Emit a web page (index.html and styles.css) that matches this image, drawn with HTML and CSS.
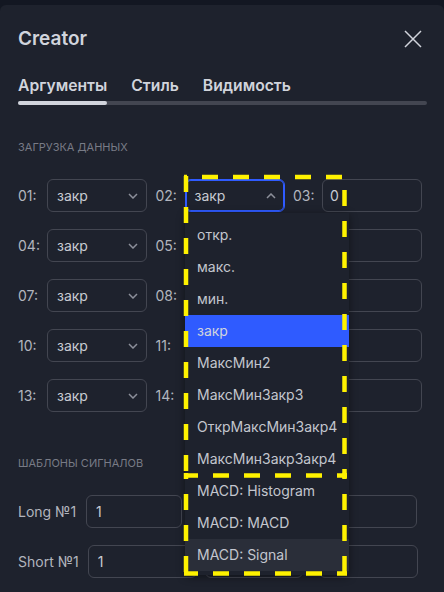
FILE: index.html
```html
<!DOCTYPE html>
<html lang="ru">
<head>
<meta charset="utf-8">
<title>Creator</title>
<link rel="stylesheet" href="styles.css">
</head>
<body>
<div class="panel">
  <header class="header">
    <h1 class="title">Creator</h1>
    <button class="close" aria-label="Закрыть"><svg width="18" height="18" viewBox="0 0 18 18"><path d="M1 1L17 17M17 1L1 17"/></svg></button>
  </header>
  <nav class="tabs">
    <span class="tab">Аргументы</span>
    <span class="tab">Стиль</span>
    <span class="tab">Видимость</span>
  </nav>
  <div class="track"><div class="track-active"></div></div>

  <section class="sec sec-data">
    <div class="sec-title">Загрузка данных</div>
    <div class="grid">
      <div class="row">
        <div class="cell"><span class="lbl">01:</span><div class="sel"><span>закр</span><svg class="chev" width="10" height="6" viewBox="0 0 10 6"><path d="M1 1L5 5L9 1"/></svg></div></div>
        <div class="cell"><span class="lbl">02:</span><div class="sel sel-open"><span>закр</span><svg class="chev" width="10" height="6" viewBox="0 0 10 6"><path d="M1 5L5 1L9 5"/></svg></div></div>
        <div class="cell"><span class="lbl">03:</span><div class="inp">0</div></div>
      </div>
      <div class="row">
        <div class="cell"><span class="lbl">04:</span><div class="sel"><span>закр</span><svg class="chev" width="10" height="6" viewBox="0 0 10 6"><path d="M1 1L5 5L9 1"/></svg></div></div>
        <div class="cell"><span class="lbl">05:</span><div class="sel"></div></div>
        <div class="cell"><span class="lbl"></span><div class="inp"></div></div>
      </div>
      <div class="row">
        <div class="cell"><span class="lbl">07:</span><div class="sel"><span>закр</span><svg class="chev" width="10" height="6" viewBox="0 0 10 6"><path d="M1 1L5 5L9 1"/></svg></div></div>
        <div class="cell"><span class="lbl">08:</span><div class="sel"></div></div>
        <div class="cell"><span class="lbl"></span><div class="inp"></div></div>
      </div>
      <div class="row">
        <div class="cell"><span class="lbl">10:</span><div class="sel"><span>закр</span><svg class="chev" width="10" height="6" viewBox="0 0 10 6"><path d="M1 1L5 5L9 1"/></svg></div></div>
        <div class="cell"><span class="lbl">11:</span><div class="sel"></div></div>
        <div class="cell"><span class="lbl"></span><div class="inp"></div></div>
      </div>
      <div class="row">
        <div class="cell"><span class="lbl">13:</span><div class="sel"><span>закр</span><svg class="chev" width="10" height="6" viewBox="0 0 10 6"><path d="M1 1L5 5L9 1"/></svg></div></div>
        <div class="cell"><span class="lbl">14:</span><div class="sel"></div></div>
        <div class="cell"><span class="lbl"></span><div class="inp"></div></div>
      </div>
    </div>
  </section>

  <section class="sec sec-signals">
    <div class="sec-title">Шаблоны сигналов</div>
    <div class="sig-rows">
      <div class="sig-row sig-long">
        <span class="sig-lbl">Long №1</span>
        <div class="inp inp-a">1</div>
        <div class="inp inp-b"></div>
        <div class="inp inp-c"></div>
      </div>
      <div class="sig-row sig-short">
        <span class="sig-lbl">Short №1</span>
        <div class="inp inp-a">1</div>
        <div class="inp inp-b"></div>
        <div class="inp inp-c"></div>
      </div>
    </div>
  </section>

  <div class="dropdown">
    <div class="item">откр.</div>
    <div class="item">макс.</div>
    <div class="item">мин.</div>
    <div class="item item-selected">закр</div>
    <div class="item">МаксМин2</div>
    <div class="item">МаксМинЗакр3</div>
    <div class="item">ОткрМаксМинЗакр4</div>
    <div class="item">МаксМинЗакрЗакр4</div>
    <div class="item">MACD: Histogram</div>
    <div class="item">MACD: MACD</div>
    <div class="item item-hover">MACD: Signal</div>
  </div>
</div>

<svg class="annot" width="444" height="592" viewBox="0 0 444 592">
  <line x1="184" y1="177" x2="347" y2="177" stroke-dashoffset="13"/>
  <line x1="344.5" y1="175" x2="344.5" y2="478" stroke-dashoffset="16"/>
  <line x1="186" y1="175" x2="186" y2="478" stroke-dashoffset="30"/>
  <line x1="184" y1="475.5" x2="347" y2="475.5" stroke-dashoffset="2"/>
  <line x1="344.5" y1="473" x2="344.5" y2="576" stroke-dashoffset="10"/>
  <line x1="186" y1="473" x2="186" y2="576" stroke-dashoffset="10"/>
  <line x1="184" y1="573.5" x2="347" y2="573.5" stroke-dashoffset="2"/>
</svg>
</body>
</html>
```

FILE: styles.css
```css
* { box-sizing: border-box; }
html, body { margin: 0; height: 100%; }
body {
  position: relative;
  overflow: hidden;
  background: #131722;
  font-family: Inter, "Noto Sans", sans-serif;
  color: #d1d4dc;
}
.panel {
  position: relative;
  margin-top: 5px;
  height: 587px;
  padding: 22px 18px 0;
  background: #1e222d;
  border-radius: 6px 6px 0 0;
}
.header {
  display: flex;
  align-items: center;
  justify-content: space-between;
  height: 24px;
}
.title {
  margin: 0;
  font-size: 19px;
  line-height: 24px;
  font-weight: 600;
  color: #d1d4dc;
}
.close {
  display: block;
  width: 18px;
  height: 18px;
  margin-right: 4px;
  padding: 0;
  border: 0;
  background: none;
}
.close svg { display: block; }
.close path { stroke: #d1d4dc; stroke-width: 1.5; fill: none; }

.tabs {
  display: flex;
  gap: 24px;
  margin-top: 25px;
  font-size: 15.7px;
  line-height: 20px;
  font-weight: 600;
  color: #d1d4dc;
}
.track {
  width: 409px;
  height: 4px;
  margin-top: 5px;
  background: #434651;
  border-radius: 2px;
}
.track-active {
  width: 89px;
  height: 100%;
  background: #d1d4dc;
  border-radius: 2px;
}

.sec-title {
  font-size: 11px;
  line-height: 16px;
  text-transform: uppercase;
  color: #787b86;
}
.sec-data { margin-top: 34px; }
.grid {
  display: flex;
  flex-direction: column;
  gap: 17px;
  margin-top: 24px;
}
.row { display: flex; gap: 8.5px; height: 33px; }
.cell { display: flex; align-items: center; }
.lbl { width: 29px; font-size: 14px; color: #b2b5be; }
.sel, .inp {
  display: flex;
  align-items: center;
  width: 100px;
  height: 33px;
  border: 1px solid #434651;
  border-radius: 6px;
  font-size: 14px;
  color: #c8cbd3;
}
.sel { justify-content: space-between; padding: 0 8px 0 9px; }
.inp { padding: 0 8px 0 7px; }
.chev path { stroke: #8c8f9a; stroke-width: 1.5; fill: none; }
.sel-open {
  border-color: #2f5bff;
  box-shadow: inset 0 0 0 1px #2f5bff;
}

.sec-signals { margin-top: 43px; }
.sig-rows {
  display: flex;
  flex-direction: column;
  gap: 17px;
  margin-top: 24px;
}
.sig-row { display: flex; align-items: center; height: 33px; }
.sig-lbl { font-size: 14px; color: #b2b5be; }
.sig-long .sig-lbl { margin-right: 10px; }
.sig-short .sig-lbl { margin-right: 9px; }
.sig-row .inp { padding-left: 9px; }
.sig-long .inp-a { width: 96px; }
.sig-long .inp-b { width: 140px; margin-left: 8px; }
.sig-long .inp-c { width: 79px; margin-left: 8px; }
.sig-short .inp-a { width: 109px; }
.sig-short .inp-b { width: 98px; margin-left: 8px; }
.sig-short .inp-c { width: 99px; margin-left: 16px; }

.dropdown {
  position: absolute;
  left: 185px;
  top: 208px;
  width: 164px;
  padding: 6px 0 4px;
  background: #1e222d;
  box-shadow: 0 2px 8px rgba(0, 0, 0, 0.45);
  border-radius: 0 0 4px 4px;
}
.item {
  height: 32px;
  padding: 0 12px;
  font-size: 14px;
  line-height: 32px;
  color: #c3c6ce;
  white-space: nowrap;
}
.item-selected { background: #2f5bff; color: #d1d4dc; }
.item-hover { background: #2a2e39; }

.annot {
  position: absolute;
  top: 0;
  left: 0;
  pointer-events: none;
}
.annot line {
  stroke: #fff200;
  stroke-width: 4.5;
  stroke-dasharray: 16 15;
  fill: none;
}
```
